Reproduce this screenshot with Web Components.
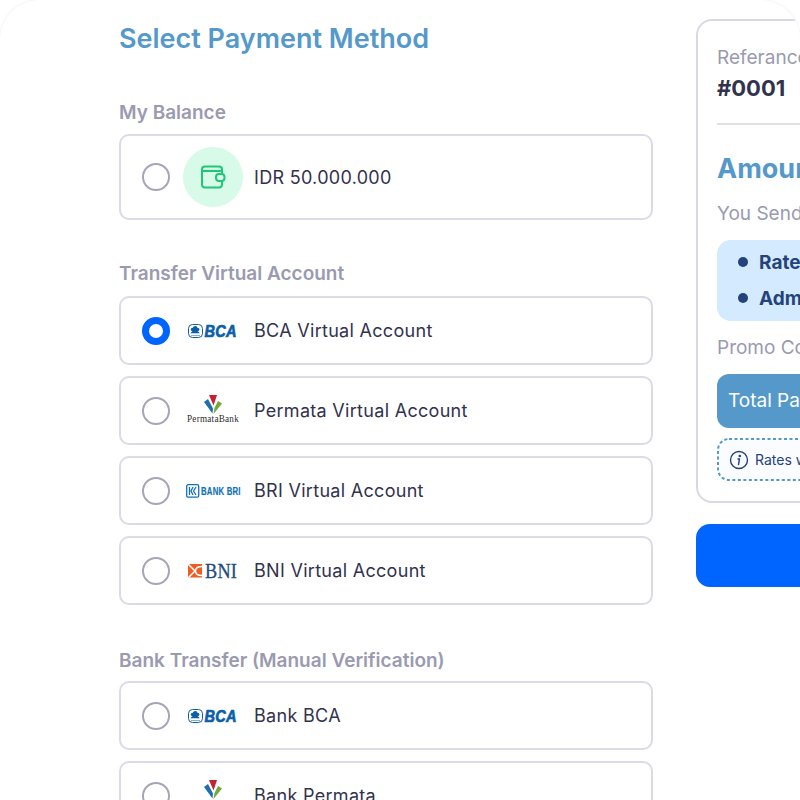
<!DOCTYPE html>
<html lang="en">
<head>
<meta charset="utf-8">
<title>Select Payment Method</title>
<style>
  html, body { margin: 0; height: 800px; overflow: hidden; background: #fff; }
  body { font-family: Inter, "Liberation Sans", sans-serif; }
</style>
</head>
<body>
<checkout-page>
  <div slot="left">
    <page-title>Select Payment Method</page-title>

    <pay-group label="My Balance" style="--label-gap: 7px">
      <pay-option tall><balance-icon slot="logo"></balance-icon>IDR 50.000.000</pay-option>
    </pay-group>

    <pay-group label="Transfer Virtual Account" style="margin-bottom: 42px">
      <pay-option checked><bank-logo slot="logo" bank="bca"></bank-logo>BCA Virtual Account</pay-option>
      <pay-option><bank-logo slot="logo" bank="permata"></bank-logo>Permata Virtual Account</pay-option>
      <pay-option><bank-logo slot="logo" bank="bri"></bank-logo>BRI Virtual Account</pay-option>
      <pay-option><bank-logo slot="logo" bank="bni"></bank-logo>BNI Virtual Account</pay-option>
    </pay-group>

    <pay-group label="Bank Transfer (Manual Verification)" style="--label-gap: 6px">
      <pay-option><bank-logo slot="logo" bank="bca"></bank-logo>Bank BCA</pay-option>
      <pay-option><bank-logo slot="logo" bank="permata"></bank-logo>Bank Permata</pay-option>
    </pay-group>
  </div>
  <div slot="right">
    <order-summary></order-summary>
    <pay-button></pay-button>
  </div>
</checkout-page>

<script>
  function define(name, css, html) {
    customElements.define(name, class extends HTMLElement {
      constructor() {
        super();
        let root = this.attachShadow({ mode: "open" });
        root.innerHTML = `<style>${css}</style>${typeof html == "function" ? html(this) : html}`;
      }
    });
  }

  define("checkout-page", `
    :host {
      display: flex;
      box-sizing: border-box;
      width: 802px;
      height: 801px;
      margin: -1px;
      border: 1px solid #f6f6f6;
      border-bottom: 0;
      border-radius: 40px 40px 0 0;
      padding: 21px 0 0 119px;
      gap: 43px;
      overflow: hidden;
      background: #fff;
    }
    .left { flex: 0 0 534px; }
    .right { flex: 0 0 400px; }
  `, `<div class="left"><slot name="left"></slot></div><div class="right"><slot name="right"></slot></div>`);

  define("page-title", `
    :host {
      display: block;
      height: 36px;
      margin-bottom: 42px;
      font-size: 27px;
      line-height: 36px;
      font-weight: 600;
      color: #5499c9;
    }
  `, `<slot></slot>`);

  define("pay-group", `
    :host { display: block; margin-bottom: 40px; }
    .label {
      font-size: 19px;
      line-height: 28px;
      font-weight: 600;
      color: #9a9ab0;
      margin-bottom: var(--label-gap, 8px);
    }
    .list { display: flex; flex-direction: column; gap: 11px; }
  `, el => `<div class="label">${el.getAttribute("label")}</div><div class="list"><slot></slot></div>`);

  define("pay-option", `
    :host {
      display: flex;
      align-items: center;
      box-sizing: border-box;
      height: 69px;
      padding: 0 21px;
      border: 2px solid #dadae8;
      border-radius: 10px;
      background: #fff;
      font-size: 18px;
      letter-spacing: 0.3px;
      color: #32324d;
    }
    :host([tall]) { height: 86px; }
    .radio {
      flex: none;
      box-sizing: border-box;
      width: 28px;
      height: 28px;
      margin-right: 13px;
      border: 2px solid #a5a5ba;
      border-radius: 50%;
    }
    :host([checked]) .radio { border: 7px solid #0064fe; }
    .logo { flex: none; display: flex; align-items: center; justify-content: center; width: 60px; margin-right: 11px; }
  `, `<span class="radio"></span><span class="logo"><slot name="logo"></slot></span><slot></slot>`);

  define("balance-icon", `
    :host {
      display: flex;
      align-items: center;
      justify-content: center;
      width: 60px;
      height: 60px;
      border-radius: 50%;
      background: #d7fbe8;
    }
    svg { display: block; }
  `, `<svg width="26" height="26" viewBox="0 0 26 26" fill="none" stroke="#1fc777" stroke-width="2" stroke-linejoin="round" stroke-linecap="round">
    <path d="M22 9.500V5.500A3 3 0 0 0 19 2.500H5A3 3 0 0 0 2 5.500v15A3 3 0 0 0 5 23.500h14a3 3 0 0 0 3-3V17.500"/>
    <path d="M2 7h20"/>
    <rect x="16" y="10" width="8.500" height="7" rx="3" fill="#d7fbe8"/>
  </svg>`);

  const logos = {
    bca: `<svg width="52" height="18" viewBox="0 0 52 18">
      <rect x="1.500" y="2.500" width="14" height="13" rx="4" fill="#fff" stroke="#0b5fa8" stroke-width="1"/>
      <path d="M8.500 4c1.200 0 1.900.8 1.700 1.800 1.300-.2 2.200.6 2.200 1.700 0 1-.8 1.600-1.800 1.700.9.500 1.600 1.100 2.200 2H3.400c.6-.9 1.300-1.500 2.200-2-1-.1-1.800-.7-1.800-1.700 0-1.100.9-1.900 2.200-1.700C5.800 4.800 7.300 4 8.500 4z" fill="#0b5fa8"/>
      <path d="M4 13.500h9" stroke="#7fb0d8" stroke-width="1"/>
      <text transform="translate(17.500 15) scale(.88 1)" font-family="Liberation Sans" font-size="16.500" font-weight="700" font-style="italic" fill="#0b5fa8" stroke="#0b5fa8" stroke-width=".7">BCA</text>
    </svg>`,
    permata: `<svg width="54" height="32" viewBox="0 0 54 32">
      <path d="M23 0h8l-3.500 10.500z" fill="#c8202f"/>
      <path d="M18 7l4-3 5 9.500-.5 5z" fill="#1f6fb0"/>
      <path d="M27.500 19l1-6 3.500-7 4 2.500z" fill="#73a83c"/>
      <text transform="translate(1 27) scale(.87 1)" font-family="Liberation Serif" font-size="10.500" fill="#2b2b2b">PermataBank</text>
    </svg>`,
    bri: `<svg width="54" height="14" viewBox="0 0 54 14">
      <rect x=".7" y=".7" width="12" height="12.500" rx="1.500" fill="none" stroke="#1072b9" stroke-width="1.300"/>
      <path d="M3.500 3v8M7 3L5 7l2 4M10 3L7.500 7l2.500 4" fill="none" stroke="#1072b9" stroke-width="1.300"/>
      <text transform="translate(15 10.800) scale(.74 1)" font-family="Liberation Sans" font-size="10.500" font-weight="700" fill="#1072b9" stroke="#1072b9" stroke-width=".2">BANK BRI</text>
    </svg>`,
    bni: `<svg width="52" height="18" viewBox="0 0 52 18">
      <rect x="1" y="2" width="14" height="13.500" fill="#ee5d23"/>
      <path d="M1 2l7 7-7 7M15 4.500C10.500 4.500 8.500 6.500 8.500 9s2 4.500 6.500 4.500" fill="none" stroke="#fff" stroke-width="1.500"/>
      <text transform="translate(18 15.500) scale(.89 1)" font-family="Liberation Serif" font-size="20.500" fill="#254a80" stroke="#254a80" stroke-width=".3">BNI</text>
    </svg>`
  };

  define("bank-logo", `
    :host { display: block; line-height: 0; }
    svg { display: block; overflow: visible; }
  `, el => logos[el.getAttribute("bank")]);

  define("order-summary", `
    :host {
      display: block;
      box-sizing: border-box;
      height: 484px;
      margin-top: -2px;
      padding: 23px 19px;
      border: 2px solid #d9d9e6;
      border-radius: 16px;
      background: #fff;
      font-size: 19px;
      color: #9a9ab0;
    }
    .ref { line-height: 28px; }
    .num { margin-top: 0; font-size: 22px; line-height: 32px; font-weight: 700; color: #32324d; }
    hr { margin: 19px 0 26px; border: 0; border-top: 2px solid #e0e0ec; }
    h2 { margin: 0; font-size: 27px; line-height: 36px; font-weight: 700; color: #5499c9; }
    .send { margin-top: 13px; line-height: 28px; }
    .rates {
      box-sizing: border-box;
      height: 81px;
      margin-top: 12px;
      padding: 4px 21px;
      border-radius: 14px;
      background: #d4eaff;
      color: #24437c;
      font-weight: 700;
    }
    .rates div { display: flex; align-items: center; gap: 11px; height: 36px; white-space: nowrap; }
    .rates i { width: 10px; height: 10px; border-radius: 50%; background: #24437c; }
    .promo { margin-top: 13px; line-height: 28px; }
    .total {
      box-sizing: border-box;
      height: 54px;
      margin-top: 12px;
      padding: 0 11px;
      border-radius: 12px;
      background: #5499c9;
      color: #fff;
      line-height: 54px;
    }
    .note {
      position: relative;
      display: flex;
      align-items: center;
      gap: 6px;
      box-sizing: border-box;
      height: 43px;
      margin-top: 10px;
      padding: 0 12px;
      border-radius: 12px;
      background: #fbfcff;
      font-size: 14px;
      color: #24437c;
      white-space: nowrap;
    }
    svg { flex: none; display: block; }
    svg.dash { position: absolute; left: 0; top: 0; width: 100%; height: 100%; }
    svg.dash rect { width: calc(100% - 2px); height: calc(100% - 2px); }
  `, `
    <div class="ref">Referance Number</div>
    <div class="num">#0001</div>
    <hr>
    <h2>Amount</h2>
    <div class="send">You Send</div>
    <div class="rates">
      <div><i></i>Rate</div>
      <div><i></i>Admin Fee</div>
    </div>
    <div class="promo">Promo Code</div>
    <div class="total">Total Payment</div>
    <div class="note">
      <svg class="dash"><rect x="1" y="1" rx="11" fill="none" stroke="#5499c9" stroke-width="2" stroke-dasharray="3 2.500"/></svg>
      <svg width="20" height="20" viewBox="0 0 20 20" fill="none" stroke="#24437c" stroke-width="1.400">
        <circle cx="10" cy="10" r="8.500"/>
        <path d="M10.500 9l-1 5.500M9 9h1.500" stroke-linecap="round"/>
        <circle cx="10.800" cy="6" r=".6" fill="#24437c"/>
      </svg>
      Rates will change
    </div>
  `);

  define("pay-button", `
    :host {
      display: block;
      height: 63px;
      margin-top: 21px;
      border-radius: 14px;
      background: #0064fe;
    }
  `, ``);
</script>
</body>
</html>
